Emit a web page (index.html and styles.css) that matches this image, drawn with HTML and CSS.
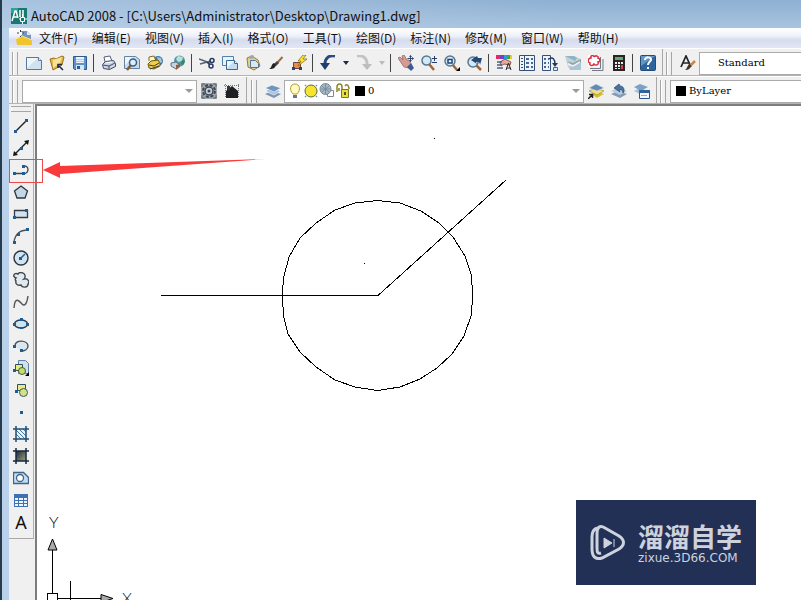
FILE: index.html
```html
<!DOCTYPE html>
<html lang="zh-CN">
<head>
    <meta charset="UTF-8">
    <meta name="viewport" content="width=device-width, initial-scale=1.0">
    <title>AutoCAD 2008</title>
    <link rel="stylesheet" href="styles.css">
</head>
<body>
    <div class="window">
        <header class="titlebar">
            <svg class="icon" viewBox="0 0 16 16">
                <rect width="16" height="16" fill="#127a70"/>
                <path d="M0 0h7v5H0z" fill="#2aa296"/>
                <path d="M1 13L4 3h1l2 7M2 9h4M9 2v7M12 2v7" fill="none" stroke="#fff" stroke-width="1.5"/>
                <path d="M8 11h2M13 11h3M11.500 6v3M11.500 13v3M9.500 9.500h4v4h-4z" fill="none" stroke="#fff"/>
            </svg>
            <h1>AutoCAD 2008 - [C:\Users\Administrator\Desktop\Drawing1.dwg]</h1>
        </header>

        <div class="frame">
            <nav class="menubar">
                <svg class="icon" viewBox="0 0 16 16">
                    <path d="M5 1h6l4 4v9H5z" fill="#7794bd"/>
                    <path d="M11 1l4 4h-4z" fill="#dbe7f5"/>
                    <path d="M0 9l6-3 10 4v5H1z" fill="#f0c42c"/>
                    <path d="M0 9l6-3 10 4" fill="none" stroke="#fbe68a"/>
                    <path d="M1 3h7M4.500 0v7" stroke="#333f56" stroke-dasharray="2 1"/>
                    <path d="M3 2h3v3H3z" fill="#fff"/>
                </svg>
                <button>文件(F)</button>
                <button>编辑(E)</button>
                <button>视图(V)</button>
                <button>插入(I)</button>
                <button>格式(O)</button>
                <button>工具(T)</button>
                <button>绘图(D)</button>
                <button>标注(N)</button>
                <button>修改(M)</button>
                <button>窗口(W)</button>
                <button>帮助(H)</button>
            </nav>

            <div class="toolbar-row">
                <!-- 标准 -->
                <div class="toolbar">
                    <span class="grip"></span>
                    <button class="tool" aria-label="新建"><svg class="icon" viewBox="0 0 16 16"><path d="M.5 2.500h12l3 3v9H.5z" fill="#cfe2ef" stroke="#557a9c"/><path d="M1 3h11L1 13z" fill="#eef6fb"/><path d="M12.500 2.500v3h3" fill="#fff" stroke="#557a9c"/></svg></button>
                    <button class="tool" aria-label="打开"><svg class="icon" viewBox="0 0 16 16"><path d="M1 4l4-1 2 1 6-3 2 1-2 8-9 5z" fill="#e4b94a" stroke="#9a6f1e"/><path d="M4 5l9-3-2 6-7 5z" fill="#f8e19a"/><path d="M14 15l-4-4M9 13V9.500h4" fill="none" stroke="#1e2a44" stroke-width="1.600"/></svg></button>
                    <button class="tool" aria-label="保存"><svg class="icon" viewBox="0 0 16 16"><path d="M1.500 1.500h13v13h-12l-1-1z" fill="#5b93cf" stroke="#2e598f"/><path d="M4 2h8v6H4z" fill="#eaf2fb"/><path d="M4 4.500h8M4 6.500h8" stroke="#b4cbe5"/><path d="M4 10h8v5H4z" fill="#dbe5ee"/><path d="M5 11h3v3H5z" fill="#32588b"/></svg></button>
                    <span class="separator"></span>
                    <button class="tool" aria-label="打印"><svg class="icon" viewBox="0 0 16 16"><path d="M4 7L3 2l6-1 2 5" fill="#fff" stroke="#56617f"/><path d="M1.500 9.500l3-3 8-1 2 3v3l-6 3-6-1z" fill="#cfd4e4" stroke="#424d6c"/><path d="M2 10l6 1 6-3M8 11v3" fill="none" stroke="#424d6c"/><path d="M5 8l6-1" stroke="#fff"/></svg></button>
                    <button class="tool" aria-label="打印预览"><svg class="icon" viewBox="0 0 16 16"><path d="M.5 1.500h11l4 3v9H.5z" fill="#c7dcea" stroke="#6384a0"/><path d="M1 2h9L1 10z" fill="#edf5fa"/><path d="M7 10l-4 5" stroke="#8b5a2d" stroke-width="2.500"/><circle cx="9" cy="7.500" r="3.500" fill="#d9efff" stroke="#3c5d7c" stroke-width="1.500"/></svg></button>
                    <button class="tool" aria-label="发布"><svg class="icon" viewBox="0 0 16 16"><circle cx="11" cy="6" r="5" fill="#3c7db2"/><path d="M10 2l4 1 1 4-3 2z" fill="#a5c9d8"/><path d="M2 6V2l5-1 2 5" fill="#fff6bd" stroke="#7a6a2f"/><path d="M1 9l3-3 7-1 2 3v3l-6 3-5-1z" fill="#efce4b" stroke="#6c5715"/><path d="M2 10l5 1 5-3M3 14l9-3" fill="none" stroke="#3e3a36"/></svg></button>
                    <button class="tool" aria-label="三维 DWF"><svg class="icon" viewBox="0 0 16 16"><circle cx="9.500" cy="6" r="5.500" fill="#4b98ad"/><path d="M8 1l5 1-1 4-4 1-2-3z" fill="#bce0d5"/><path d="M12 5l3 1-2 4-2-1z" fill="#438252"/><path d="M1 8l5-1 4 3-4 4-5-3z" fill="#c8d3df" stroke="#61738a"/><path d="M6 10l4-1v3l-4 3z" fill="#93603f"/></svg></button>
                    <span class="separator"></span>
                    <button class="tool" aria-label="剪切"><svg class="icon" viewBox="0 0 16 16"><path d="M0 4l11 4M1 9l11-3" stroke="#566174" stroke-width="1.500"/><circle cx="13" cy="5.500" r="2" fill="none" stroke="#28395e" stroke-width="1.500"/><circle cx="12" cy="11" r="2" fill="none" stroke="#28395e" stroke-width="1.500"/><path d="M8 7l3 3" stroke="#28395e" stroke-width="1.500"/></svg></button>
                    <button class="tool" aria-label="复制"><svg class="icon" viewBox="0 0 16 16"><path d="M.5 1.500h11v9H.5z" fill="#e7f2fa" stroke="#5282aa"/><path d="M4.500 5.500h8l3 3v6h-11z" fill="#c2def0" stroke="#396b97"/><path d="M5 6h7l-7 7z" fill="#f0f8fd"/><path d="M12.500 5.500v3h3" fill="#fff" stroke="#396b97"/></svg></button>
                    <button class="tool" aria-label="粘贴"><svg class="icon" viewBox="0 0 16 16"><path d="M2 3l5-2 6 4 2 6-6 4-6-3z" fill="#e6cf8c" stroke="#8c7c4c"/><path d="M4 1l4-1 2 3-5 1z" fill="#a2a7a6"/><path d="M5.500 5.500h5l3 3v4h-8z" fill="#d5e8f3" stroke="#557590"/></svg></button>
                    <button class="tool" aria-label="特性匹配"><svg class="icon" viewBox="0 0 16 16"><path d="M14.500 2L9 8" stroke="#9d6d43" stroke-width="2"/><path d="M10 7l-3 3" stroke="#464646" stroke-width="3"/><path d="M8 10c-1 4-4 4-7 4 3-1 2-5 5-6z" fill="#222"/></svg></button>
                    <button class="tool" aria-label="块编辑器"><svg class="icon" viewBox="0 0 16 16"><path d="M2.500 7.500h7v6h-7z" fill="#ef8848" stroke="#6f4541"/><path d="M1 12h3v3H1zM8 12h3v3H8z" fill="#23476f"/><path d="M12 0L7 6h3l-3 5 9-7h-4l3-4z" fill="#ffe22d" stroke="#7c6212" stroke-width=".7"/></svg></button>
                    <span class="separator"></span>
                    <button class="tool" aria-label="放弃"><svg class="icon" viewBox="0 0 16 16"><path d="M15 1C9 0 5 3 5 9v2" fill="none" stroke="#284a7c" stroke-width="3"/><path d="M0 8h10l-5 7z" fill="#203d6b"/></svg></button>
                    <button class="tool-drop" aria-label="放弃列表"><svg viewBox="0 0 6 4"><path d="M0 0h6L3 4z" fill="#1c2a4a"/></svg></button>
                    <button class="tool" aria-label="重做"><svg class="icon" viewBox="0 0 16 16"><path d="M1 1c6-1 10 2 10 8v2" fill="none" stroke="#c3c3c3" stroke-width="3"/><path d="M6 9h10l-5 6z" fill="#bdbdbd"/></svg></button>
                    <button class="tool-drop" aria-label="重做列表"><svg viewBox="0 0 6 4"><path d="M0 0h6L3 4z" fill="#bbb"/></svg></button>
                    <span class="separator"></span>
                    <button class="tool" aria-label="实时平移"><svg class="icon" viewBox="0 0 16 16"><path d="M0 3l2-1 3 3-1-4 2-1 3 5 2 0 2 4-2 4-5-1z" fill="#d59b91" stroke="#9b6864" stroke-width=".8"/><path d="M9 12l4-4 3 5-3 3z" fill="#3b5c93"/><path d="M9.500 3.500h6M12.500.500v6" stroke="#2b4777"/><path d="M12.500 0l-1.500 2h3zM12.500 7L11 5h3zM16 3.500L14 2v3z" fill="#2b4777"/></svg></button>
                    <button class="tool" aria-label="实时缩放"><svg class="icon" viewBox="0 0 16 16"><path d="M8 9l5 6" stroke="#a36536" stroke-width="2.500"/><circle cx="5.500" cy="5.500" r="4.500" fill="#d3e9f8" stroke="#587890" stroke-width="1.500"/><path d="M11 3.500h5M13.500 1v5M11 7.500h5" stroke="#253d68"/></svg></button>
                    <button class="tool" aria-label="窗口缩放"><svg class="icon" viewBox="0 0 16 16"><path d="M8 9l5 6" stroke="#a36536" stroke-width="2.500"/><circle cx="6" cy="6" r="5" fill="#d3e9f8" stroke="#587890" stroke-width="1.500"/><path d="M4 4.500h4v3.500H4z" fill="#fff" stroke="#1c4471" stroke-width="1.500"/><path d="M16 12v4h-4z"/></svg></button>
                    <button class="tool" aria-label="缩放上一个"><svg class="icon" viewBox="0 0 16 16"><path d="M8 9l6 6" stroke="#a36536" stroke-width="2.500"/><circle cx="6" cy="7" r="5" fill="#d3e9f8" stroke="#587890" stroke-width="1.500"/><path d="M4 5l6-4 1 2h4l-2 7c0-3-2-4-4-3l1 2z" fill="#244874"/></svg></button>
                    <span class="separator"></span>
                    <button class="tool" aria-label="特性"><svg class="icon" viewBox="0 0 16 16"><path d="M0 0h4v4H0z" fill="#e22b61"/><path d="M4 0h4v4H4z" fill="#7f39c5"/><path d="M8 0h3v4H8z" fill="#24a2d0"/><path d="M11 0h3v4h-3z" fill="#38a846"/><path d="M14 0h2v4h-2z" fill="#eacb23"/><path d="M4 7l5-3 6 3-1 3-6-1-3 2z" fill="#e7aaa0" stroke="#8d5650"/><path d="M1 7h5M1 10h5M1 13h6" stroke="#446681" stroke-width="1.500"/><path d="M10 15l2.500-7 2.500 7M11 13h3" fill="none" stroke="#222"/></svg></button>
                    <button class="tool" aria-label="设计中心"><svg class="icon" viewBox="0 0 16 16"><path d="M.5.5h15v15H.5z" fill="#f0f4f9" stroke="#344f78"/><path d="M5.500 1v14" stroke="#344f78"/><path d="M2 3.500h2M2 6.500h2M2 9.500h2M2 12.500h2" stroke="#344f78"/><path d="M7 3h3v2H7zM12 3h2v2h-2zM7 7h3v2H7zM12 7h2v2h-2zM7 11h3v2H7zM12 11h2v2h-2z" fill="#45699a"/></svg></button>
                    <button class="tool" aria-label="工具选项板"><svg class="icon" viewBox="0 0 16 16"><path d="M.5.500h8v15h-8z" fill="#edf3f9" stroke="#344f78"/><path d="M2 3h2v2H2zM6 3h1v2H6zM2 7h2v2H2zM6 7h1v2H6zM2 11h2v2H2zM6 11h1v2H6z" fill="#45699a"/><path d="M7 4c4-3 6 1 6 5" fill="none" stroke="#203b60" stroke-width="1.500"/><path d="M10 8h6l-3 4z" fill="#203b60"/><path d="M11.500 12.500h4v3h-4z" fill="#d9e8f3" stroke="#47688a"/></svg></button>
                    <button class="tool" aria-label="图纸集管理器"><svg class="icon" viewBox="0 0 16 16"><path d="M0 1h9l7 3v11H5l-2-3z" fill="#c3d2d9"/><path d="M0 1h9l3 2-2 3z" fill="#8cb4c9"/><path d="M2 6l6 2 8-4v4l-7 4z" fill="#8ea3ab"/><path d="M5 12l11-4v7H5z" fill="#a9c6d6"/><path d="M3 9l5 2 7-4" fill="none" stroke="#eef2f3" stroke-width="1.500"/></svg></button>
                    <button class="tool" aria-label="标记集管理器"><svg class="icon" viewBox="0 0 16 16"><path d="M2 13.500h10.500V2M4 15.500h11V4" fill="none" stroke="#737985"/><path d="M0 0h11v12H0z" fill="#fff"/><path d="M3 3c-1-3 3-3 3-1 1-2 5-1 4 1 3 1 2 4 0 4 1 3-2 4-4 2-2 3-5 1-4-1-3-1-2-5 1-5z" fill="#fff" stroke="#dc3042" stroke-width="1.500"/></svg></button>
                    <button class="tool" aria-label="快速计算器"><svg class="icon" viewBox="0 0 16 16"><path d="M2 0h12v16H2z" fill="#2a2323"/><path d="M4 2h8v3H4z" fill="#67a876"/><path d="M4 7h2v2H4zM7 7h2v2H7zM10 7h2v2h-2zM4 10h2v2H4zM7 10h2v2H7zM4 13h2v1H4zM7 13h2v1H7z" fill="#eee"/><path d="M10 10h2v4h-2z" fill="#d6414c"/></svg></button>
                    <span class="separator"></span>
                    <button class="tool" aria-label="帮助"><svg class="icon" viewBox="0 0 16 16"><rect x=".5" y=".5" width="15" height="15" rx="1" fill="#2e659f" stroke="#244c77"/><path d="M1 1h14L1 11z" fill="#6597c3"/><path d="M5 5c0-4 7-3 6 0-1 2-3 2-3 5M8 12v2" fill="none" stroke="#fff" stroke-width="2"/></svg></button>
                </div>

                <!-- 样式 -->
                <div class="toolbar toolbar-fill">
                    <span class="grip"></span>
                    <button class="tool" aria-label="文字样式"><svg class="icon" viewBox="0 0 16 16"><path d="M1 12L6 1l5 11M3 8h6" fill="none" stroke="#222" stroke-width="1.700"/><path d="M15 6l-5 5" stroke="#c6894b" stroke-width="2.500"/><path d="M11 10c0 4-3 5-6 5 2-1 2-4 4-6z" fill="#3c342d"/></svg></button>
                    <label class="combo combo-text">
                        <select aria-label="文字样式">
                            <option>Standard</option>
                        </select>
                    </label>
                </div>
            </div>

            <div class="toolbar-row">
                <!-- 工作空间 -->
                <div class="toolbar">
                    <span class="grip"></span>
                    <label class="combo combo-workspace">
                        <select aria-label="工作空间">
                            <option></option>
                        </select>
                        <svg class="combo-arrow" viewBox="0 0 8 4"><path d="M0 0h8L4 4z"/></svg>
                    </label>
                    <button class="tool" aria-label="工作空间设置"><svg class="icon" viewBox="0 0 16 16"><path d="M0 0h16v16H0z" fill="#a4a9ae"/><path d="M1 4V1h3M12 1h3v3M15 12v3h-3M4 15H1v-3" fill="none" stroke="#59616a"/><circle cx="8" cy="8" r="6" fill="none" stroke="#3c4754" stroke-width="2" stroke-dasharray="3 1.700"/><circle cx="8" cy="8" r="4" fill="#c7ced5" stroke="#3c4754" stroke-width="1.500"/><circle cx="8" cy="8" r="1.500" fill="#3c4754"/></svg></button>
                    <button class="tool" aria-label="我的工作空间"><svg class="icon" viewBox="0 0 16 16"><path d="M1.500 1v14M14.500 1v14M0 2.500h16" stroke="#777" stroke-dasharray="1 1"/><path d="M2 8l6-5 6 5v7H2z" fill="#1f2023"/><path d="M3 3h3v4H3z" fill="#34363a"/></svg></button>
                </div>

                <!-- 图层 -->
                <div class="toolbar toolbar-layers">
                    <span class="grip"></span>
                    <button class="tool" aria-label="图层特性管理器"><svg class="icon" viewBox="0 0 16 16"><path d="M0 11l7-3 9 3-7 4z" fill="#7a95b5"/><path d="M0 8l7-3 9 3-7 4z" fill="#a9c2dc" stroke="#fff" stroke-width=".6"/><path d="M0 5l7-3 9 3-7 4z" fill="#6f96c0" stroke="#fff" stroke-width=".6"/></svg></button>
                    <label class="combo combo-layer">
                        <svg class="icon" viewBox="0 0 16 16"><path d="M6 11C2 7 3 1 8 1s6 6 2 10z" fill="#fffbc1" stroke="#b59b31"/><path d="M6 12h4v3H6z" fill="#67758c"/></svg>
                        <svg class="icon" viewBox="0 0 16 16"><circle cx="8" cy="8" r="6" fill="#f7e42f" stroke="#5d6b38"/><path d="M2 2l1 1M14 2l-1 1M2 14l1-1M14 14l-1-1" stroke="#6a95b5" stroke-width="1.500"/></svg>
                        <svg class="icon" viewBox="0 0 16 16"><path d="M8.500 7.500h6v6h-6z" fill="#fff" stroke="#7f8a97"/><circle cx="6.500" cy="6" r="5.500" fill="#a7b8c4" stroke="#74899a"/><path d="M6.500 1v10M2 6h9M3 3l7 6M10 3L3 9" stroke="#718695" stroke-width=".8"/></svg>
                        <svg class="icon" viewBox="0 0 16 16"><path d="M2 9V4c0-4 5-4 5 0v4M4 8V5" fill="none" stroke="#8b8429" stroke-width="1.500"/><path d="M6.500 6.500h7v8h-7z" fill="#e8df3a" stroke="#7d7524"/><path d="M10 3c2-3 4 0 4 3" fill="none" stroke="#8b8429" stroke-width="1.500"/><path d="M9 9h2v3H9z" fill="#5b551b"/></svg>
                        <span class="swatch"></span>
                        <select aria-label="图层">
                            <option>0</option>
                        </select>
                        <svg class="combo-arrow" viewBox="0 0 8 4"><path d="M0 0h8L4 4z"/></svg>
                    </label>
                    <button class="tool" aria-label="将对象的图层置为当前"><svg class="icon" viewBox="0 0 16 16"><path d="M3 11l6-3 7 3-7 4z" fill="#d9bf35"/><path d="M1 8l7-3 8 3-7 4z" fill="#f2e177" stroke="#938024" stroke-width=".6"/><path d="M1 5l7-4 8 4-7 3z" fill="#6689b3" stroke="#dbe6f0" stroke-width=".6"/><path d="M0 16l4-4M1 11.500h3.500V15" fill="none" stroke="#1b202b" stroke-width="1.500"/></svg></button>
                    <button class="tool" aria-label="上一个图层"><svg class="icon" viewBox="0 0 16 16"><path d="M0 11l7-3 9 3-7 4z" fill="#849bb6"/><path d="M0 8l7-3 9 3-7 4z" fill="#b8cce0"/><path d="M3 5l5-4 1 2c4 0 5 4 3 7 0-3-2-4-4-3l1 2z" fill="#49739f" stroke="#28496f" stroke-width=".7"/></svg></button>
                    <button class="tool" aria-label="图层状态管理器"><svg class="icon" viewBox="0 0 16 16"><path d="M0 8l6-3 7 3-7 3z" fill="#a8bed7"/><path d="M0 4l6-3 8 3-7 4z" fill="#7da0c6"/><path d="M5.500 7.500h10v8h-10z" fill="#f4f8fb" stroke="#28598d"/><path d="M5 7h11v3H5z" fill="#316399"/><path d="M7 12.500h6" stroke="#8eaac7"/></svg></button>
                </div>

                <!-- 对象特性 -->
                <div class="toolbar toolbar-fill">
                    <span class="grip"></span>
                    <label class="combo combo-color">
                        <span class="swatch"></span>
                        <select aria-label="颜色">
                            <option>ByLayer</option>
                        </select>
                    </label>
                </div>
            </div>

            <main class="workspace">
                <div class="dock">
                    <!-- 绘图 -->
                    <aside class="palette">
                        <span class="grip grip-top"></span>
                        <button class="draw" aria-label="直线"><svg class="icon" viewBox="0 0 16 16"><path d="M2 14L14 2" stroke="#222" stroke-width="1.400"/><path d="M1 12h3v3H1zM12 1h3v3h-3z" fill="#1d5d94"/></svg></button>
                        <button class="draw" aria-label="构造线"><svg class="icon" viewBox="0 0 16 16"><path d="M2 14L14 2" stroke="#222" stroke-width="1.400"/><path d="M0 16l1-5 4 4zM16 0l-1 5-4-4z" fill="#111"/><path d="M7 7h3v3H7z" fill="#1d5d94"/></svg></button>
                        <div class="marked">
                            <button class="draw" aria-label="多段线"><svg class="icon" viewBox="0 0 16 16"><path d="M1 11.500h10M10 4c7-1 6 8 1 7.500" fill="none" stroke="#394355" stroke-width="1.300"/><path d="M0 10h3v3H0zM9 3h3v3H9zM9 10h3v3H9z" fill="#1d5d94"/></svg></button>
                            <svg class="pointer" viewBox="0 0 222 22"><path d="M0 11L17 3v4L222 0 17 15v4z" fill="#fa3a3a"/></svg>
                        </div>
                        <button class="draw" aria-label="正多边形"><svg class="icon" viewBox="0 0 16 16"><path d="M8 2l6.500 5L12 14H4L1.500 7z" fill="#c5d7e2" stroke="#2d3640" stroke-width="1.300"/></svg></button>
                        <button class="draw" aria-label="矩形"><svg class="icon" viewBox="0 0 16 16"><path d="M1.500 4.500h13v7h-13z" fill="#d3e2ed" stroke="#333c48" stroke-width="1.300"/><path d="M12 3h3v3h-3zM0 10h3v3H0z" fill="#1d5d94"/></svg></button>
                        <button class="draw" aria-label="圆弧"><svg class="icon" viewBox="0 0 16 16"><path d="M1 14C2 7 6 2 15 2" fill="none" stroke="#4c525b" stroke-width="1.300"/><path d="M0 13h3v3H0zM4 5h3v3H4zM13 0h3v3h-3z" fill="#1d5d94"/></svg></button>
                        <button class="draw" aria-label="圆"><svg class="icon" viewBox="0 0 16 16"><circle cx="8" cy="8" r="7" fill="#d2e4ef" stroke="#2c3641" stroke-width="1.400"/><path d="M8 8l4-4" stroke="#1d5d94" stroke-width="1.500"/><path d="M6 7h3v3H6z" fill="#1d5d94"/></svg></button>
                        <button class="draw" aria-label="修订云线"><svg class="icon" viewBox="0 0 16 16"><path d="M3 6C-1 5 1 0 5 2c2-3 8-1 7 3 0 1 0 1-1 2 4-1 6 3 4 5 0 4-6 4-7 1-3 1-6-1-5-4-1-1-1-2 0-3z" fill="#e2eaf0" stroke="#414951" stroke-width="1.400"/></svg></button>
                        <button class="draw" aria-label="样条曲线"><svg class="icon" viewBox="0 0 16 16"><path d="M1 14c1-13 6-6 8-4 3 3 5-1 6-8" fill="none" stroke="#555" stroke-width="1.400"/></svg></button>
                        <button class="draw" aria-label="椭圆"><svg class="icon" viewBox="0 0 16 16"><ellipse cx="8" cy="8" rx="6.500" ry="4" fill="#cfe4f2" stroke="#2b4050" stroke-width="1.400"/><path d="M7 2h3v3H7zM0 7h3v3H0zM13 7h3v3h-3zM7 11h3v2H7z" fill="#1d5d94"/></svg></button>
                        <button class="draw" aria-label="椭圆弧"><svg class="icon" viewBox="0 0 16 16"><path d="M2 8c0-7 13-6 13 0 0 3-3 5-7 5" fill="#dce6ed" stroke="#45515c" stroke-width="1.400"/><path d="M0 7h3v3H0zM7 11h3v3H7z" fill="#1d5d94"/></svg></button>
                        <button class="draw" aria-label="插入块"><svg class="icon" viewBox="0 0 16 16"><path d="M5.500.500h7l3 3v10h-10z" fill="#cfe0ef" stroke="#5f82ad"/><path d="M2.500 4.500h7v6h-7z" fill="#e7ec82" stroke="#32505d"/><circle cx="9" cy="11" r="3.500" fill="#cada73" stroke="#3b612f"/><path d="M0 9h3v3H0z" fill="#1d5d94"/><path d="M16 12v4h-4z"/></svg></button>
                        <button class="draw" aria-label="创建块"><svg class="icon" viewBox="0 0 16 16"><path d="M4.500 2.500h8v6h-8z" fill="#e7ec82" stroke="#32505d"/><circle cx="10.500" cy="10.500" r="4" fill="#d6df8b" stroke="#3e5c4f"/><path d="M2 8h3v3H2z" fill="#1d5d94"/></svg></button>
                        <button class="draw" aria-label="点"><svg class="icon" viewBox="0 0 16 16"><path d="M7 7h3v3H7z" fill="#1d5d94"/></svg></button>
                        <button class="draw" aria-label="图案填充"><svg class="icon" viewBox="0 0 16 16"><path d="M3 3h10v10H3z" fill="#e4f3fb"/><path d="M3 4l9 9M6 3l7 7M3 8l5 5M10 3l3 3" stroke="#447aa2"/><path d="M0 3h16M0 13h16M3 0v16M13 0v16" stroke="#214c70" stroke-width="1.500"/></svg></button>
                        <button class="draw" aria-label="渐变色"><svg class="icon" viewBox="0 0 16 16"><defs><linearGradient id="shade" x2="1" y2="1"><stop stop-color="#1d263b"/><stop offset="1" stop-color="#9ba47b"/></linearGradient></defs><path d="M3 3h10v10H3z" fill="url(#shade)"/><path d="M0 3h16M0 13h16M3 0v16M13 0v16" stroke="#17283c" stroke-width="1.500"/></svg></button>
                        <button class="draw" aria-label="面域"><svg class="icon" viewBox="0 0 16 16"><path d="M.5 2.500h10l5 5v6H.5z" fill="#c4dcec" stroke="#3d658e" stroke-width="1.300"/><circle cx="7" cy="8" r="3.500" fill="#fff" stroke="#3d658e" stroke-width="1.300"/></svg></button>
                        <button class="draw" aria-label="表格"><svg class="icon" viewBox="0 0 16 16"><path d="M1 2h14v13H1z" fill="#3e70b4"/><path d="M2 6h3v2H2zM6 6h4v2H6zM11 6h3v2h-3zM2 9h3v2H2zM6 9h4v2H6zM11 9h3v2h-3zM2 12h3v2H2zM6 12h4v2H6zM11 12h3v2h-3z" fill="#eef4fb"/></svg></button>
                        <button class="draw draw-text" aria-label="多行文字">A</button>
                    </aside>
                </div>

                <section class="canvas">
                    <svg class="drawing">
                        <g fill="none" stroke="#000" shape-rendering="crispEdges">
                            <path d="M124 189.500H341L469 74"/>
                            <path d="M340.500 94.500L363 97L384 105L402 117L416 131L428 150L434 168L436 189L434 210L427 230L415 248L400 262L383 273L363 281L340.500 284.500L318 281L298 274L279 261L263 246L251 228L247 212L245 189L247 170L252 151L263 132L279 117L298 104L318 97Z"/>
                            <path d="M397 32.500h1M327 157.500h1"/>
                            <!-- 坐标系图标 -->
                            <path d="M15.500 487V433M20 492.500H64M33.500 475V494M10.500 487.500h10v10h-10z"/>
                        </g>
                        <path d="M15.500 433l-4.500 11h9zM76 492.500l-12-4v8z" fill="#aaa" stroke="#000"/>
                        <text class="axis" x="12" y="422">Y</text>
                        <text class="axis" x="85" y="498">X</text>
                    </svg>

                    <div class="watermark">
                        <svg class="watermark-logo" viewBox="0 0 36 38">
                            <path d="M7 4C4 5 2 8 2 13v12c0 8 4 11 10 9l17-9c6-4 6-9 0-13L15 4C10 1 7 3 7 9v15c0 5 1 6 4 5" fill="none" stroke="#ced2dc" stroke-width="3"/>
                            <path d="M14 14l8 5-8 5zM24 15v8" fill="#ced2dc" stroke="#ced2dc"/>
                        </svg>
                        <div class="watermark-text">
                            <strong>溜溜自学</strong>
                            <span>zixue.3D66.COM</span>
                        </div>
                    </div>
                </section>
            </main>
        </div>
    </div>
</body>
</html>
```
FILE: styles.css
```css
* {
    box-sizing: border-box;
}
body {
    margin: 0;
    font-family: "Noto Sans CJK SC", sans-serif;
    font-size: 12px;
    color: #111;
}
button, select {
    font: inherit;
    color: inherit;
    background: none;
    border: none;
    padding: 0;
    margin: 0;
}
.window {
    display: flex;
    flex-direction: column;
    height: 100vh;
    overflow: hidden;
    border-left: 2px solid #263c4d;
    background: #b9d1ea;
}
.icon {
    display: block;
    width: 16px;
    height: 16px;
    flex: none;
}

/* 标题栏 */
.titlebar {
    display: flex;
    align-items: center;
    gap: 4px;
    height: 28px;
    flex: none;
    padding: 4px 9px 0;
    background: linear-gradient(to right, #c2d6eb80, #b0c9e200 70%), linear-gradient(#8eb0d2, #a9c4e0);
}
.titlebar h1 {
    margin: 0;
    font-size: 13px;
    font-weight: 400;
    line-height: 16px;
    white-space: nowrap;
}
.frame {
    flex: 1;
    min-height: 0;
    display: flex;
    flex-direction: column;
    margin-left: 7px;
    background: #f0f0f0;
}

/* 菜单栏 */
.menubar {
    display: flex;
    align-items: center;
    gap: 14px;
    height: 20px;
    flex: none;
    padding-left: 7px;
    background: linear-gradient(#fff, #eef1f9 40%, #d5dcee 60%, #e2e7f4);
}
.menubar .icon {
    margin-right: -7px;
}
.menubar button {
    line-height: 18px;
    white-space: nowrap;
}

/* 工具栏 */
.toolbar-row {
    display: flex;
    height: 28px;
    flex: none;
    border-top: 1px solid #fff;
}
.toolbar {
    display: flex;
    align-items: center;
    flex: none;
    padding: 2px 3px 0;
    border-right: 1px solid #a8a8a8;
    border-bottom: 1px solid #b4b4b4;
}
.toolbar-fill {
    flex: 1;
    min-width: 0;
    padding-right: 0;
    border-right: none;
}
.toolbar-layers {
    padding-left: 4px;
}
.grip {
    flex: none;
    width: 6px;
    height: 23px;
    margin-right: 4px;
    border: 1px solid #a5a5a5;
    border-width: 0 1px;
    background: linear-gradient(to right, #fff 1px, #f0f0f0 1px);
}
.grip-top {
    width: 20px;
    height: 6px;
    margin: 0 0 3px;
    border-width: 1px 0;
}
.tool {
    display: flex;
    align-items: center;
    justify-content: center;
    flex: none;
    width: 23px;
    height: 23px;
}
.tool-drop {
    display: flex;
    align-items: center;
    justify-content: center;
    flex: none;
    width: 13px;
    height: 23px;
}
.tool-drop svg {
    width: 6px;
    height: 4px;
}
.separator {
    flex: none;
    width: 6px;
    height: 18px;
    background: linear-gradient(#444, #444) 2px 0 / 1px 100% no-repeat;
}

/* 下拉框 */
.combo {
    display: flex;
    align-items: center;
    height: 23px;
    min-width: 0;
    border: 1px solid #ababab;
    background: #fff;
}
.combo select {
    flex: 1;
    min-width: 0;
    appearance: none;
    font-family: "DejaVu Serif", serif;
    font-size: 10px;
    line-height: 20px;
    color: #000;
    outline: none;
}
.combo-arrow {
    flex: none;
    width: 8px;
    height: 4px;
    margin-right: 3px;
    fill: #9a9a9a;
}
.combo-workspace {
    width: 175px;
}
.combo-layer {
    width: 300px;
    padding-left: 2px;
}
.combo-layer .swatch {
    margin-left: 4px;
}
.combo-text {
    flex: 1;
    padding-left: 18px;
    border-right: none;
}
.combo-color {
    flex: 1;
    padding-left: 5px;
    border-right: none;
}
.swatch {
    flex: none;
    width: 10px;
    height: 10px;
    margin-right: 3px;
    background: #000;
}

/* 工作区 */
.workspace {
    display: flex;
    flex: 1;
    min-height: 0;
}
.dock {
    flex: none;
    width: 26px;
}
.palette {
    display: flex;
    flex-direction: column;
    align-items: center;
    width: 25px;
    padding: 2px 0 5px;
    border-right: 1px solid #b0b0b0;
    border-bottom: 1px solid #a8a8a8;
}
.draw {
    display: flex;
    align-items: center;
    justify-content: center;
    width: 22px;
    height: 22px;
}
.draw-text {
    font-family: "Noto Sans", sans-serif;
    font-size: 18px;
    line-height: 22px;
}
.marked {
    position: relative;
}
.marked::after {
    content: "";
    position: absolute;
    top: 0;
    left: -1px;
    width: 32px;
    height: 22px;
    border: 1px solid #ee4a4a;
    z-index: 1;
}
.pointer {
    position: absolute;
    left: 33px;
    top: 0;
    width: 222px;
    height: 22px;
    z-index: 1;
}
.canvas {
    position: relative;
    flex: 1;
    min-width: 0;
    border: 2px solid #7d7d7d;
    border-width: 2px 0 0 2px;
    background: #fff;
}
.drawing {
    display: block;
    width: 100%;
    height: 100%;
}
.axis {
    font-family: Lato, sans-serif;
    font-size: 16px;
    font-weight: 300;
}

/* 水印 */
.watermark {
    position: absolute;
    right: 45px;
    bottom: 15px;
    display: flex;
    align-items: center;
    gap: 12px;
    width: 180px;
    height: 85px;
    padding-left: 14px;
    background: #223056;
    color: #ced2dc;
}
.watermark-logo {
    width: 36px;
    height: 38px;
}
.watermark-text strong {
    display: block;
    font-size: 26px;
    font-weight: 700;
    line-height: 30px;
}
.watermark-text span {
    display: block;
    font-family: "DejaVu Sans", sans-serif;
    font-size: 12px;
    line-height: 14px;
}
```
